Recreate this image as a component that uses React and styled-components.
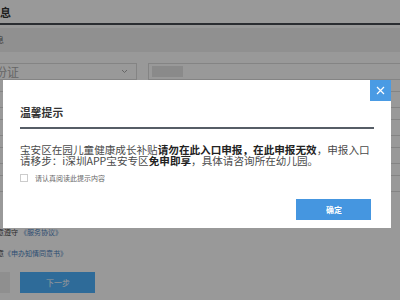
import styled, { createGlobalStyle } from 'styled-components'

const GlobalStyle = createGlobalStyle`
   html, body {
      margin: 0;
      padding: 0;
      width: 400px;
      height: 300px;
      overflow: hidden;
      background: #fff;
      font-family: "Noto Sans CJK SC", "Noto Sans", sans-serif;
   }
`

const App = () => {
   return (
      <>
         <GlobalStyle />
         <Page>
            <Header>填写信息</Header>
            <Band>
               <Small $scale={0.8}>申请人信息</Small>
            </Band>
            <FieldRow>
               <Select>
                  <span>身份证</span>
                  <svg width="7" height="5" viewBox="0 0 7 5">
                     <path d="M1 1l2.5 2.5L6 1" fill="none" stroke="#aaa" strokeWidth="1" />
                  </svg>
               </Select>
               <Input>
                  <GrayBlock />
               </Input>
            </FieldRow>
            <FieldRow>
               <Input />
            </FieldRow>
            <FieldRow>
               <Input />
            </FieldRow>
            <FieldRow>
               <Input />
            </FieldRow>
            <FieldRow>
               <Input />
            </FieldRow>
            <Agreement $top={33}>
               <Small $scale={0.7}>
                  我已阅读并同意遵守<Link $gap={3}>《服务协议》</Link>
               </Small>
            </Agreement>
            <Agreement $top={7}>
               <Small $scale={0.7}>
                  我已阅读并同意<Link $gap={0}>《申办知情同意书》</Link>
               </Small>
            </Agreement>
            <Actions>
               <PageButton $variant="gray">上一步</PageButton>
               <PageButton>
                  <Small $scale={0.8} $center>下一步</Small>
               </PageButton>
            </Actions>
         </Page>

         <Mask>
            <Modal>
               <CloseButton aria-label="close">
                  <svg width="9" height="9" viewBox="0 0 9 9">
                     <path d="M1 1l7 7M8 1L1 8" stroke="#fff" strokeWidth="1.2" />
                  </svg>
               </CloseButton>
               <ModalHeader>
                  <ModalTitle>温馨提示</ModalTitle>
               </ModalHeader>
               <ModalText>
                  宝安区在园儿童健康成长补贴<b>请勿在此入口申报，在此申报无效</b>，申报入口请移步：i深圳APP宝安专区<b>免申即享</b>，具体请咨询所在幼儿园。
               </ModalText>
               <CheckRow>
                  <CheckBox />
                  <CheckLabel>
                     <Small $scale={0.7}>请认真阅读此提示内容</Small>
                  </CheckLabel>
               </CheckRow>
               <ModalFooter>
                  <ConfirmButton>
                     <Small $scale={0.8} $center>确定</Small>
                  </ConfirmButton>
               </ModalFooter>
            </Modal>
         </Mask>
      </>
   )
}

// tiny text: 10px scaled down so the browser's minimum font size does not kick in
const Small = styled.span`
   display: inline-block;
   font-size: 10px;
   line-height: 10px;
   white-space: nowrap;
   transform: scale(${(p) => p.$scale});
   transform-origin: ${(p) => (p.$center ? 'center' : 'left center')};
`

const Page = styled.div`
   width: 520px;
   height: 300px;
   margin-left: -60px;
   background: #fff;
`

const Header = styled.div`
   height: 23px;
   padding-left: 27px;
   display: flex;
   align-items: center;
   font-size: 11px;
   font-weight: 700;
   color: #333;
   border-bottom: 2px solid #474c53;
`

const Band = styled.div`
   margin-top: 3px;
   height: 24px;
   padding-left: 24px;
   display: flex;
   align-items: center;
   background: #f1f1f1;
   color: #666;
`

const FieldRow = styled.div`
   margin-top: 11px;
   height: 17px;
   display: flex;
   gap: 11px;
   padding-left: 41px;
`

const Select = styled.div`
   width: 156px;
   box-sizing: border-box;
   border: 1px solid #ddd;
   padding: 0 8px 0 1px;
   display: flex;
   align-items: center;
   justify-content: space-between;
   font-size: 12px;
   color: #aaa;
`

const Input = styled.div`
   flex: 1;
   box-sizing: border-box;
   border: 1px solid #ddd;
   padding: 2px 3px;
   display: flex;
`

const GrayBlock = styled.div`
   width: 31px;
   background: #e6e6e6;
`

const Agreement = styled.div`
   margin-top: ${(p) => p.$top}px;
   height: 14px;
   padding-left: 15px;
   display: flex;
   align-items: center;
   color: #444;
`

const Link = styled.span`
   color: #4a7fc0;
   margin-left: ${(p) => p.$gap}px;
`

const Actions = styled.div`
   margin-top: 12px;
   display: flex;
   gap: 10px;
`

const PageButton = styled.div`
   width: ${(p) => (p.$variant === 'gray' ? 70 : 75)}px;
   height: 21px;
   display: flex;
   align-items: center;
   justify-content: center;
   font-size: 10px;
   color: ${(p) => (p.$variant === 'gray' ? '#eeeeee' : '#fff')};
   background: ${(p) => (p.$variant === 'gray' ? '#eeeeee' : '#4db3ff')};
`

const Mask = styled.div`
   position: fixed;
   inset: 0;
   background: rgba(0, 0, 0, 0.4);
   padding: 80px 0 0 3px;
`

const Modal = styled.div`
   position: relative;
   width: 388px;
   box-sizing: border-box;
   padding: 0 17px 8px;
   background: #fff;
`

const CloseButton = styled.div`
   position: absolute;
   top: 0;
   right: 0;
   width: 21px;
   height: 21px;
   background: #4a9be4;
   display: flex;
   align-items: center;
   justify-content: center;
`

const ModalHeader = styled.div`
   padding: 26px 0 9px;
   border-bottom: 2px solid #565d66;
`

const ModalTitle = styled.div`
   font-size: 10.8px;
   line-height: 12px;
   font-weight: 700;
   color: #333;
`

const ModalText = styled.p`
   margin: 16px 0 0;
   font-size: 10.6px;
   line-height: 10.5px;
   color: #4a4a4a;
   b {
      color: #222;
      font-weight: 700;
   }
`

const CheckRow = styled.div`
   margin-top: 8px;
   display: flex;
   align-items: center;
   gap: 7px;
`

const CheckBox = styled.span`
   width: 8px;
   height: 8px;
   box-sizing: border-box;
   border: 1px solid #ccc;
   background: #fff;
`

const CheckLabel = styled.span`
   display: flex;
   align-items: center;
   height: 8px;
   color: #666;
`

const ModalFooter = styled.div`
   margin-top: 17px;
   padding-right: 3px;
   display: flex;
   justify-content: flex-end;
`

const ConfirmButton = styled.div`
   width: 75px;
   height: 21px;
   display: flex;
   align-items: center;
   justify-content: center;
   background: #4596e0;
   color: #fff;
   font-weight: 700;
`

export default App
